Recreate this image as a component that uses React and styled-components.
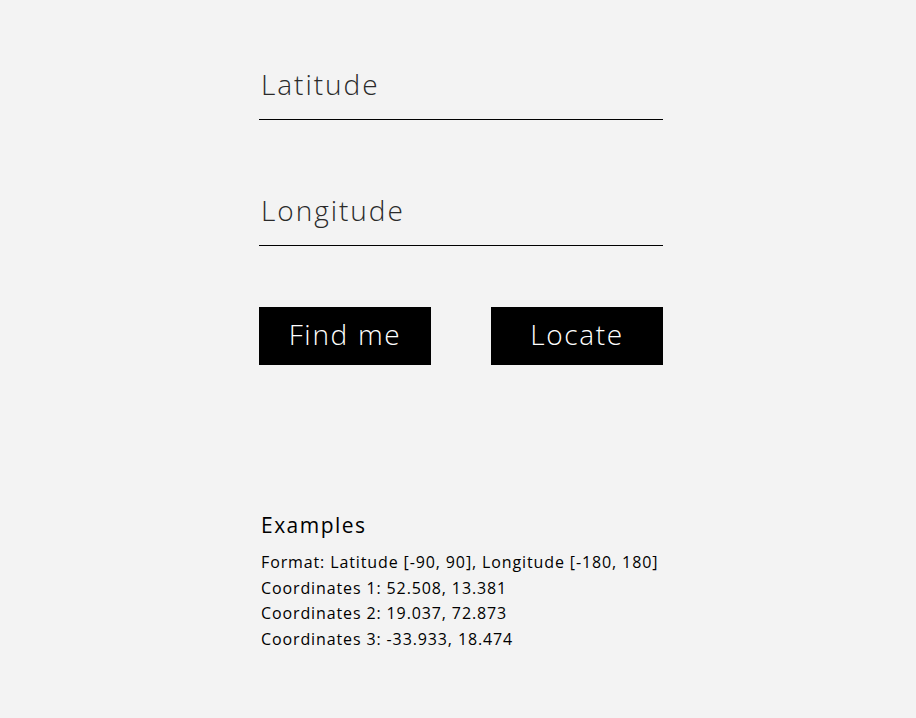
import React, { useState } from "react";
import styled, { createGlobalStyle } from "styled-components";

const GlobalStyle = createGlobalStyle`
  html, body {
    margin: 0;
    padding: 0;
    background: #f3f3f3;
  }
  body {
    font-family: "Open Sans", "Noto Sans", sans-serif;
    color: #000;
  }
`;

const Page = styled.div`
  display: flex;
  flex-direction: column;
  width: 404px;
  margin: 0 auto;
  padding: 52px 0 0 6px;
`;

const Form = styled.form`
  display: flex;
  flex-direction: column;
  gap: 58px;
`;

const Field = styled.input`
  display: block;
  width: 100%;
  box-sizing: border-box;
  height: 68px;
  padding: 0 2px 4px 2px;
  border: none;
  border-bottom: 1px solid #000;
  background: transparent;
  outline: none;
  font-family: inherit;
  font-size: 28px;
  font-weight: 300;
  letter-spacing: 0.07em;
  color: #2a2a2a;

  &::placeholder {
    color: #2a2a2a;
    opacity: 1;
  }
`;

const ButtonRow = styled.div`
  display: flex;
  justify-content: space-between;
  margin-top: 3px;
`;

const Button = styled.button`
  width: 172px;
  height: 58px;
  border: none;
  background: #000;
  color: #fff;
  font-family: inherit;
  font-size: 28px;
  font-weight: 300;
  letter-spacing: 0.06em;
  cursor: pointer;
  padding: 0 0 4px 0;
`;

const Examples = styled.section`
  margin-top: 146px;
  padding-left: 2px;
`;

const Heading = styled.h3`
  margin: 0 0 10px 0;
  font-size: 21px;
  font-weight: 400;
  letter-spacing: 0.07em;
  line-height: 29px;
`;

const Line = styled.p`
  margin: 0;
  font-size: 16px;
  line-height: 25.7px;
  font-weight: 400;
  letter-spacing: 0.055em;
`;

const examples = [
  "Format: Latitude [-90, 90], Longitude [-180, 180]",
  "Coordinates 1: 52.508, 13.381",
  "Coordinates 2: 19.037, 72.873",
  "Coordinates 3: -33.933, 18.474",
];

export default function App() {
  const [lat, setLat] = useState("");
  const [lng, setLng] = useState("");

  return (
    <>
      <GlobalStyle />
      <Page>
        <Form onSubmit={(e) => e.preventDefault()}>
          <Field
            placeholder="Latitude"
            value={lat}
            onChange={(e) => setLat(e.target.value)}
          />
          <Field
            placeholder="Longitude"
            value={lng}
            onChange={(e) => setLng(e.target.value)}
          />
          <ButtonRow>
            <Button type="button">Find me</Button>
            <Button type="submit">Locate</Button>
          </ButtonRow>
        </Form>
        <Examples>
          <Heading>Examples</Heading>
          {examples.map((line) => (
            <Line key={line}>{line}</Line>
          ))}
        </Examples>
      </Page>
    </>
  );
}
